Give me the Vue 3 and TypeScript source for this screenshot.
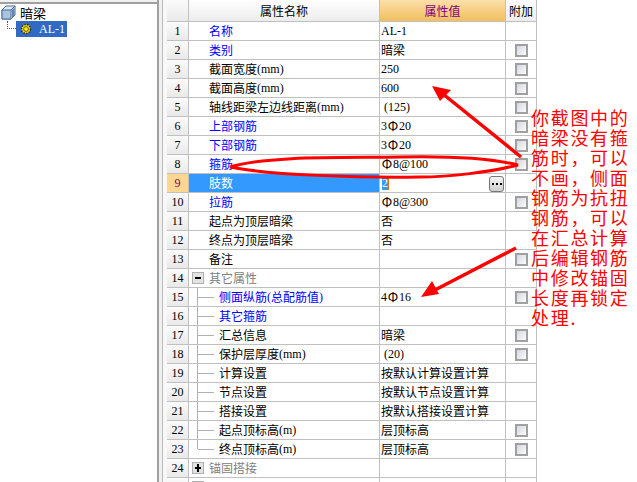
<script setup lang="ts">
interface Row {
  no: number
  name: string
  value?: string
  check?: boolean
  blue?: boolean
  child?: boolean
  last?: boolean
  group?: 'open' | 'closed'
  active?: boolean
  indent?: boolean
}

const rows: Row[] = [
  { no: 1, name: '名称', value: 'AL-1', blue: true },
  { no: 2, name: '类别', value: '暗梁', blue: true, check: true },
  { no: 3, name: '截面宽度(mm)', value: '250', check: true },
  { no: 4, name: '截面高度(mm)', value: '600', check: true },
  { no: 5, name: '轴线距梁左边线距离(mm)', value: '(125)', indent: true, check: true },
  { no: 6, name: '上部钢筋', value: '3Φ20', blue: true, check: true },
  { no: 7, name: '下部钢筋', value: '3Φ20', blue: true, check: true },
  { no: 8, name: '箍筋', value: 'Φ8@100', blue: true, check: true },
  { no: 9, name: '肢数', active: true },
  { no: 10, name: '拉筋', value: 'Φ8@300', blue: true, check: true },
  { no: 11, name: '起点为顶层暗梁', value: '否' },
  { no: 12, name: '终点为顶层暗梁', value: '否' },
  { no: 13, name: '备注', check: true },
  { no: 14, name: '其它属性', group: 'open' },
  { no: 15, name: '侧面纵筋(总配筋值)', value: '4Φ16', blue: true, child: true, check: true },
  { no: 16, name: '其它箍筋', blue: true, child: true },
  { no: 17, name: '汇总信息', value: '暗梁', child: true, check: true },
  { no: 18, name: '保护层厚度(mm)', value: '(20)', indent: true, child: true, check: true },
  { no: 19, name: '计算设置', value: '按默认计算设置计算', child: true },
  { no: 20, name: '节点设置', value: '按默认节点设置计算', child: true },
  { no: 21, name: '搭接设置', value: '按默认搭接设置计算', child: true },
  { no: 22, name: '起点顶标高(m)', value: '层顶标高', child: true, check: true },
  { no: 23, name: '终点顶标高(m)', value: '层顶标高', child: true, last: true, check: true },
  { no: 24, name: '锚固搭接', group: 'closed' },
  { no: 25, name: '', group: 'closed' },
]

const note = [
  '你截图中的',
  '暗梁没有箍',
  '筋时，可以',
  '不画，侧面',
  '钢筋为抗扭',
  '钢筋，可以',
  '在汇总计算',
  '后编辑钢筋',
  '中修改锚固',
  '长度再锁定',
  '处理.',
]

// ascii runs use a narrower font than the cjk text, like the old bitmap font did
function split(text = '') {
  return (text.match(/[\x20-\x7e]+|Φ|[^\x20-\x7eΦ]+/g) ?? []).map((t) => ({
    t,
    cls: t === 'Φ' ? 'bar' : /^[\x20-\x7e]/.test(t) ? 'latin' : '',
  }))
}
</script>

<template>
  <div class="page">
    <aside class="tree">
      <div class="tree-root">
        <svg class="cube" width="15" height="15" viewBox="0 0 15 15">
          <path d="M1 5 L5 1 H14 V10 L10 14 H1 Z" fill="#dce8f5" stroke="#4a6c95" />
          <path d="M1 5 H10 V14 H1 Z" fill="#a9c3e0" stroke="#4a6c95" />
          <path d="M10 5 L14 1 M10 14 L14 10" stroke="#4a6c95" fill="none" />
          <path d="M11 5 L13.500 2.500 V10 L11 12.500 Z" fill="#5f86b3" />
        </svg>
        <span>暗梁</span>
      </div>
      <div class="tree-node">
        <span class="link"></span>
        <div class="node-label">
          <svg class="gear" width="12" height="12" viewBox="0 0 12 12">
            <circle cx="6" cy="6" r="4.500" fill="#ffe600" stroke="#222" stroke-width="1.500" stroke-dasharray="1.500 1.200" />
            <circle cx="6" cy="6" r="2.400" fill="#fff200" stroke="#333" stroke-width="0.800" />
          </svg>
          <span class="latin">AL-1</span>
        </div>
      </div>
    </aside>

    <div class="splitter"></div>

    <section class="grid">
      <div class="cell head no"></div>
      <div class="cell head title">属性名称</div>
      <div class="cell head title value-head">属性值</div>
      <div class="cell head title">附加</div>

      <template v-for="row in rows" :key="row.no">
        <div class="cell no" :class="{ active: row.active }">
          <span v-if="row.no < 25" class="latin">{{ row.no }}</span>
        </div>
        <div
          class="cell name"
          :class="{
            blue: row.blue,
            child: row.child,
            last: row.last,
            group: row.group,
            selected: row.active,
          }"
        >
          <span v-if="row.group" class="expander">
            <i class="minus"></i>
            <i v-if="row.group === 'closed'" class="plus"></i>
          </span>
          <span v-for="(p, i) in split(row.name)" :key="i" :class="p.cls">{{ p.t }}</span>
        </div>
        <div class="cell val" :class="{ indent: row.indent }">
          <template v-if="row.active">
            <span class="editing latin">2</span>
            <button class="more"><i></i><i></i><i></i></button>
          </template>
          <span v-for="(p, i) in split(row.value)" :key="i" :class="p.cls">{{ p.t }}</span>
        </div>
        <div class="cell add">
          <span v-if="row.check" class="box"></span>
        </div>
      </template>
    </section>

    <!-- hand drawn markup on top of the screenshot -->
    <svg class="marks" width="637" height="482" viewBox="0 0 637 482">
      <path
        d="M230 167 C270 155 350 158 400 157 C450 156 490 158 518 165 C490 172 450 177 420 177 C360 178 270 175 230 167 Z"
        fill="none"
        stroke="#ff0000"
        stroke-width="3"
      />
      <path d="M521 157 L443 94" stroke="#ff0000" stroke-width="3.500" fill="none" />
      <path d="M432 86 L451 90 L440 101 Z" fill="#ff0000" />
      <path d="M516 248 L433 291" stroke="#ff0000" stroke-width="3.500" fill="none" />
      <path d="M421 297 L432 281 L439 294 Z" fill="#ff0000" />
    </svg>
    <div class="note">
      <div v-for="line in note" :key="line">{{ line }}</div>
    </div>
  </div>
</template>

<style scoped>
.page {
  position: relative;
  display: flex;
  width: 637px;
  height: 482px;
  overflow: hidden;
  background: #fff;
  font-family: "Noto Sans CJK SC", sans-serif;
  font-size: 12px;
  color: #000;
}

.tree {
  width: 157px;
  border-right: 2px solid #a0a0a0;
  flex-shrink: 0;
  padding-top: 4px;
  background: linear-gradient(#f0f0f0 2px, #a0a0a0 2px, #a0a0a0 4px, #fff 4px);
  background-repeat: no-repeat;
  background-size: 100% 4px;
}

.tree-root {
  display: flex;
  align-items: center;
  gap: 4px;
  height: 17px;
  padding-left: 1px;
  font-size: 13px;
}

.cube {
  flex-shrink: 0;
}

.tree-node {
  display: flex;
  height: 16px;
}

.link {
  width: 9px;
  height: 8px;
  margin-left: 7px;
  border-left: 1px dotted #555;
  border-bottom: 1px dotted #555;
  box-sizing: border-box;
}

.node-label {
  display: flex;
  align-items: center;
  width: 51px;
  height: 16px;
  background: #316ac5;
  color: #fff;
  padding-left: 4px;
  gap: 7px;
  box-sizing: border-box;
}

.splitter {
  width: 8px;
  flex-shrink: 0;
  box-sizing: border-box;
  background: linear-gradient(90deg, #f0f0f0 3px, #bbb 3px, #bbb 4px, #f8f8f8 4px);
}

.grid {
  display: grid;
  grid-template-columns: 22px 191px 126px 31px;
  grid-template-rows: 22px;
  grid-auto-rows: 19px;
  width: 370px;
  flex-shrink: 0;
}

.cell {
  position: relative;
  display: flex;
  align-items: center;
  box-sizing: border-box;
  border-right: 1px solid #c0c0c0;
  border-bottom: 1px solid #c0c0c0;
  white-space: pre;
  line-height: 18px;
  overflow: hidden;
}

.head {
  background: linear-gradient(#ffffff, #ececec);
}

.title {
  justify-content: center;
}

.value-head {
  background: linear-gradient(#fce0a8, #f1bf60);
  color: #800080;
}

.no {
  justify-content: center;
  background: linear-gradient(#fbfbfb, #e9e9e9);
}

.no.active {
  background: #fdd68f;
  color: #800060;
}

.name {
  padding-left: 20px;
}

.name.child {
  padding-left: 30px;
}

.name.group {
  padding-left: 20px;
  color: #808080;
}

.name.blue {
  color: #0000ff;
}

.name.selected {
  background: #3399ff;
  color: #fff;
}

/* tree guide lines of the property group */
.name.child::before {
  content: "";
  position: absolute;
  left: 8px;
  top: 0;
  bottom: -1px;
  border-left: 1px solid #b0b0b0;
}

.name.child.last::before {
  bottom: 9px;
}

.name.child::after {
  content: "";
  position: absolute;
  left: 9px;
  top: 9px;
  width: 16px;
  border-top: 1px solid #b0b0b0;
}

.expander {
  position: absolute;
  left: 3px;
  top: 3px;
  width: 12px;
  height: 12px;
  box-sizing: border-box;
  border: 1px solid #b0b0b0;
  background: #e2e2e2;
}

.minus {
  position: absolute;
  left: 2px;
  top: 4px;
  width: 6px;
  height: 2px;
  background: #000;
}

.plus {
  position: absolute;
  left: 4px;
  top: 1px;
  width: 2px;
  height: 8px;
  background: #000;
}

.val {
  padding-left: 1px;
}

.val.indent {
  padding-left: 4px;
}

.latin {
  font-family: "Liberation Serif", serif;
  font-size: 12px;
}

.bar {
  display: inline-block;
  width: 12px;
  font-size: 13px;
  text-align: center;
}

.editing {
  width: 6px;
  margin-left: 1px;
  background: #3399ff;
  color: #fff;
  border-right: 1px solid #e07000;
  height: 14px;
  line-height: 14px;
}

.more {
  position: absolute;
  right: 1px;
  top: 2px;
  width: 15px;
  height: 16px;
  display: flex;
  align-items: center;
  justify-content: center;
  gap: 2px;
  padding: 0;
  border: 1px solid #777;
  border-radius: 3px;
  background: linear-gradient(#f4f4f4, #d0d0d0);
}

.more i {
  width: 2px;
  height: 2px;
  background: #000;
}

.add {
  justify-content: center;
  padding-left: 1px;
}

.box {
  width: 13px;
  height: 13px;
  box-sizing: border-box;
  border: 2px solid #a0a0a0;
  background: linear-gradient(135deg, #d4d8df, #fbfbfb);
}

.marks {
  position: absolute;
  left: 0;
  top: 0;
  pointer-events: none;
}

.note {
  position: absolute;
  left: 531px;
  top: 107px;
  font-size: 18px;
  line-height: 20px;
  letter-spacing: 1.700px;
  color: #ff0000;
  white-space: pre;
}
</style>
